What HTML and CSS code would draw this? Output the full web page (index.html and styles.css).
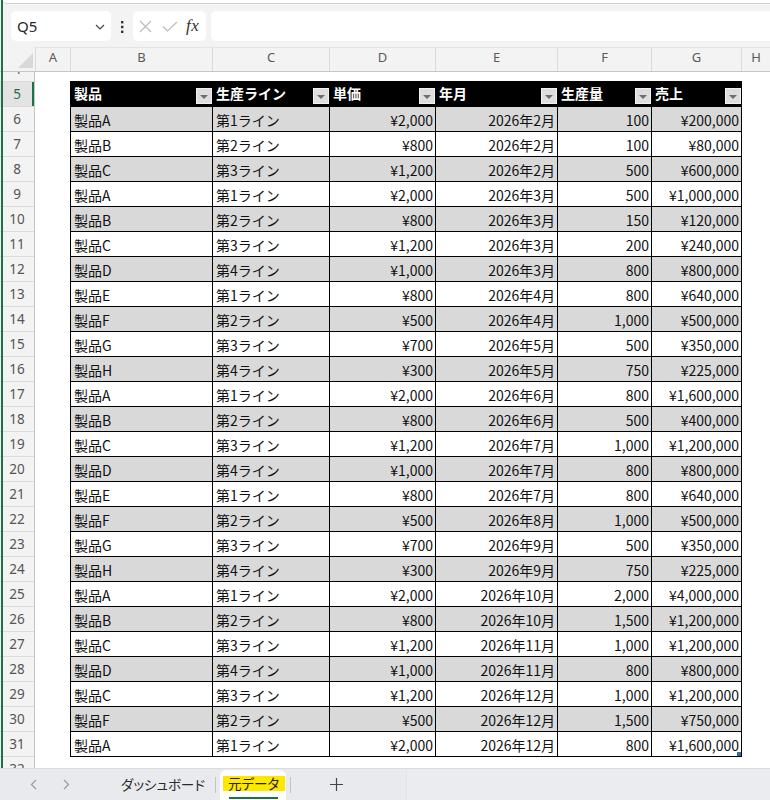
FILE: index.html
```html
<!DOCTYPE html>
<html lang="ja">
<head>
<meta charset="utf-8">
<title>元データ</title>
<link rel="stylesheet" href="styles.css">
</head>
<body>
<div class="app">
  <div class="topstrip"><div class="ribbon"></div></div>
  <div class="fbar">
    <div class="namebox">
      <span class="nb-text">Q5</span>
      <svg class="chev" width="10" height="6" viewBox="0 0 10 6"><path d="M1 1l4 4 4-4" fill="none" stroke="#444" stroke-width="1.2"/></svg>
    </div>
    <svg class="vdots" width="3" height="12" viewBox="0 0 3 12"><rect x="0" y="0" width="2.4" height="2.4" fill="#333"/><rect x="0" y="4.8" width="2.4" height="2.4" fill="#333"/><rect x="0" y="9.6" width="2.4" height="2.4" fill="#333"/></svg>
    <div class="fxbox">
      <svg class="ico-x" width="13" height="13" viewBox="0 0 13 13"><path d="M1 1l11 11M12 1L1 12" stroke="#bdbdbd" stroke-width="1.2" fill="none"/></svg>
      <svg class="ico-ok" width="16" height="11" viewBox="0 0 16 11"><path d="M1 5.5l4.5 4.5L15 1" stroke="#bdbdbd" stroke-width="1.2" fill="none"/></svg>
      <span class="fx"><i>f</i><i>x</i></span>
    </div>
    <div class="finput"></div>
  </div>

  <div class="colheads">
    <div class="corner"><svg width="15" height="15" viewBox="0 0 15 15"><polygon points="15,0 15,15 0,15" fill="#d8d8d8"/></svg></div>
    <div class="ch">A</div>
    <div class="ch">B</div>
    <div class="ch">C</div>
    <div class="ch">D</div>
    <div class="ch">E</div>
    <div class="ch">F</div>
    <div class="ch">G</div>
    <div class="ch">H</div>
  </div>

  <div class="sheet">
    <div class="rowheads">
      <div class="rh-inner">
        <div class="rh">4</div>
        <div class="rh sel">5</div>
        <div class="rh">6</div><div class="rh">7</div><div class="rh">8</div><div class="rh">9</div>
        <div class="rh">10</div><div class="rh">11</div><div class="rh">12</div><div class="rh">13</div>
        <div class="rh">14</div><div class="rh">15</div><div class="rh">16</div><div class="rh">17</div>
        <div class="rh">18</div><div class="rh">19</div><div class="rh">20</div><div class="rh">21</div>
        <div class="rh">22</div><div class="rh">23</div><div class="rh">24</div><div class="rh">25</div>
        <div class="rh">26</div><div class="rh">27</div><div class="rh">28</div><div class="rh">29</div>
        <div class="rh">30</div><div class="rh">31</div><div class="rh">32</div>
      </div>
    </div>
    <div class="canvas">
      <div class="tbl">
        <div class="tr th">
          <div class="c"><span class="hl">製品</span><span class="dd"></span></div>
          <div class="c"><span class="hl">生産ライン</span><span class="dd"></span></div>
          <div class="c"><span class="hl">単価</span><span class="dd"></span></div>
          <div class="c"><span class="hl">年月</span><span class="dd"></span></div>
          <div class="c"><span class="hl">生産量</span><span class="dd"></span></div>
          <div class="c"><span class="hl">売上</span><span class="dd"></span></div>
        </div>
        <div class="tr g"><div class="c">製品A</div><div class="c">第1ライン</div><div class="c r">¥2,000</div><div class="c r">2026年2月</div><div class="c r">100</div><div class="c r">¥200,000</div></div>
        <div class="tr"><div class="c">製品B</div><div class="c">第2ライン</div><div class="c r">¥800</div><div class="c r">2026年2月</div><div class="c r">100</div><div class="c r">¥80,000</div></div>
        <div class="tr g"><div class="c">製品C</div><div class="c">第3ライン</div><div class="c r">¥1,200</div><div class="c r">2026年2月</div><div class="c r">500</div><div class="c r">¥600,000</div></div>
        <div class="tr"><div class="c">製品A</div><div class="c">第1ライン</div><div class="c r">¥2,000</div><div class="c r">2026年3月</div><div class="c r">500</div><div class="c r">¥1,000,000</div></div>
        <div class="tr g"><div class="c">製品B</div><div class="c">第2ライン</div><div class="c r">¥800</div><div class="c r">2026年3月</div><div class="c r">150</div><div class="c r">¥120,000</div></div>
        <div class="tr"><div class="c">製品C</div><div class="c">第3ライン</div><div class="c r">¥1,200</div><div class="c r">2026年3月</div><div class="c r">200</div><div class="c r">¥240,000</div></div>
        <div class="tr g"><div class="c">製品D</div><div class="c">第4ライン</div><div class="c r">¥1,000</div><div class="c r">2026年3月</div><div class="c r">800</div><div class="c r">¥800,000</div></div>
        <div class="tr"><div class="c">製品E</div><div class="c">第1ライン</div><div class="c r">¥800</div><div class="c r">2026年4月</div><div class="c r">800</div><div class="c r">¥640,000</div></div>
        <div class="tr g"><div class="c">製品F</div><div class="c">第2ライン</div><div class="c r">¥500</div><div class="c r">2026年4月</div><div class="c r">1,000</div><div class="c r">¥500,000</div></div>
        <div class="tr"><div class="c">製品G</div><div class="c">第3ライン</div><div class="c r">¥700</div><div class="c r">2026年5月</div><div class="c r">500</div><div class="c r">¥350,000</div></div>
        <div class="tr g"><div class="c">製品H</div><div class="c">第4ライン</div><div class="c r">¥300</div><div class="c r">2026年5月</div><div class="c r">750</div><div class="c r">¥225,000</div></div>
        <div class="tr"><div class="c">製品A</div><div class="c">第1ライン</div><div class="c r">¥2,000</div><div class="c r">2026年6月</div><div class="c r">800</div><div class="c r">¥1,600,000</div></div>
        <div class="tr g"><div class="c">製品B</div><div class="c">第2ライン</div><div class="c r">¥800</div><div class="c r">2026年6月</div><div class="c r">500</div><div class="c r">¥400,000</div></div>
        <div class="tr"><div class="c">製品C</div><div class="c">第3ライン</div><div class="c r">¥1,200</div><div class="c r">2026年7月</div><div class="c r">1,000</div><div class="c r">¥1,200,000</div></div>
        <div class="tr g"><div class="c">製品D</div><div class="c">第4ライン</div><div class="c r">¥1,000</div><div class="c r">2026年7月</div><div class="c r">800</div><div class="c r">¥800,000</div></div>
        <div class="tr"><div class="c">製品E</div><div class="c">第1ライン</div><div class="c r">¥800</div><div class="c r">2026年7月</div><div class="c r">800</div><div class="c r">¥640,000</div></div>
        <div class="tr g"><div class="c">製品F</div><div class="c">第2ライン</div><div class="c r">¥500</div><div class="c r">2026年8月</div><div class="c r">1,000</div><div class="c r">¥500,000</div></div>
        <div class="tr"><div class="c">製品G</div><div class="c">第3ライン</div><div class="c r">¥700</div><div class="c r">2026年9月</div><div class="c r">500</div><div class="c r">¥350,000</div></div>
        <div class="tr g"><div class="c">製品H</div><div class="c">第4ライン</div><div class="c r">¥300</div><div class="c r">2026年9月</div><div class="c r">750</div><div class="c r">¥225,000</div></div>
        <div class="tr"><div class="c">製品A</div><div class="c">第1ライン</div><div class="c r">¥2,000</div><div class="c r">2026年10月</div><div class="c r">2,000</div><div class="c r">¥4,000,000</div></div>
        <div class="tr g"><div class="c">製品B</div><div class="c">第2ライン</div><div class="c r">¥800</div><div class="c r">2026年10月</div><div class="c r">1,500</div><div class="c r">¥1,200,000</div></div>
        <div class="tr"><div class="c">製品C</div><div class="c">第3ライン</div><div class="c r">¥1,200</div><div class="c r">2026年11月</div><div class="c r">1,000</div><div class="c r">¥1,200,000</div></div>
        <div class="tr g"><div class="c">製品D</div><div class="c">第4ライン</div><div class="c r">¥1,000</div><div class="c r">2026年11月</div><div class="c r">800</div><div class="c r">¥800,000</div></div>
        <div class="tr"><div class="c">製品C</div><div class="c">第3ライン</div><div class="c r">¥1,200</div><div class="c r">2026年12月</div><div class="c r">1,000</div><div class="c r">¥1,200,000</div></div>
        <div class="tr g"><div class="c">製品F</div><div class="c">第2ライン</div><div class="c r">¥500</div><div class="c r">2026年12月</div><div class="c r">1,500</div><div class="c r">¥750,000</div></div>
        <div class="tr"><div class="c">製品A</div><div class="c">第1ライン</div><div class="c r">¥2,000</div><div class="c r">2026年12月</div><div class="c r">800</div><div class="c r last">¥1,600,000<span class="handle"></span></div></div>
      </div>
    </div>
  </div>

  <div class="tabs">
    <div class="nav"><svg width="7" height="11" viewBox="0 0 7 11"><path d="M6 1L1.5 5.5 6 10" fill="none" stroke="#9a9a9a" stroke-width="1.2"/></svg></div>
    <div class="nav"><svg width="7" height="11" viewBox="0 0 7 11"><path d="M1 1l4.5 4.5L1 10" fill="none" stroke="#9a9a9a" stroke-width="1.2"/></svg></div>
    <div class="tab">ダッシュボード</div>
    <div class="tsep"></div>
    <div class="tab active"><span class="tcolor">元データ</span><span class="uline"></span></div>
    <div class="tsep"></div>
    <div class="addtab"><svg width="13" height="13" viewBox="0 0 13 13"><path d="M6.5 0v13M0 6.5h13" stroke="#444" stroke-width="1.2"/></svg></div>
    <div class="hscroll"></div>
  </div>
</div>
</body>
</html>
```

FILE: styles.css
```css
* { box-sizing: border-box; }
html, body { margin: 0; padding: 0; }
body {
  width: 770px;
  height: 800px;
  overflow: hidden;
  background: #f3f3f3;
  font-family: "Noto Sans CJK JP", "Noto Sans", sans-serif;
}
.app {
  position: relative;
  width: 770px;
  height: 800px;
  display: flex;
  flex-direction: column;
}
.app::before {
  content: "";
  position: absolute;
  left: 1px;
  top: 0;
  width: 2px;
  height: 768px;
  background: #1e7145;
  z-index: 5;
}

/* top ribbon edge */
.topstrip {
  height: 4px;
  background: #f3f3f3;
}
.ribbon {
  height: 4px;
  margin-left: 3px;
  background: #ffffff;
  border-bottom: 1px solid #d2d2d2;
  border-bottom-left-radius: 6px;
}

/* formula bar */
.fbar {
  height: 43px;
  display: flex;
  align-items: flex-start;
  padding: 7px 0 0 11px;
  background: #f3f3f3;
}
.namebox {
  width: 100px;
  height: 30px;
  background: #fff;
  border-radius: 5px;
  display: flex;
  align-items: center;
  justify-content: space-between;
  padding: 0 6px 0 6px;
}
.nb-text {
  font-family: "Noto Sans", sans-serif;
  font-size: 15px;
  color: #262626;
}
.chev { margin-top: 1px; }
.vdots {
  margin: 10px 9px 0 10px;
}
.fxbox {
  width: 73px;
  height: 30px;
  background: #fff;
  border-radius: 5px;
  display: flex;
  align-items: center;
  padding-left: 6px;
}
.ico-x { margin-right: 10px; }
.ico-ok { margin-right: 8px; margin-top: 1px; }
.fx {
  font-family: "Liberation Serif", serif;
  font-size: 17px;
  color: #333;
  letter-spacing: 0.5px;
}
.finput {
  flex: 1;
  height: 30px;
  margin-left: 5px;
  background: #fff;
  border-top-left-radius: 5px;
  border-bottom-left-radius: 5px;
}

/* column headers */
.colheads {
  height: 25px;
  display: grid;
  grid-template-columns: 35px 35px 142px 117px 106px 122px 94px 90px 1fr;
  background: #f3f3f3;
  border-bottom: 1px solid #c6c6c6;
}
.corner {
  display: flex;
  align-items: flex-end;
  justify-content: flex-end;
  padding: 0 2px 3px 0;
}
.ch {
  border-left: 1px solid #dadada;
  border-top: 1px solid #e4e4e4;
  display: flex;
  align-items: center;
  justify-content: center;
  padding-bottom: 5px;
  font-family: "Noto Sans", sans-serif;
  font-size: 13px;
  color: #5a5a5a;
}

/* sheet */
.sheet {
  height: 696px;
  display: flex;
}
.rowheads {
  width: 35px;
  background: #f3f3f3;
  border-right: 1px solid #c6c6c6;
  overflow: hidden;
}
.rh-inner { margin-top: -15px; }
.rh {
  height: 25px;
  border-bottom: 1px solid #dcdcdc;
  display: flex;
  align-items: center;
  justify-content: center;
  font-family: "Noto Sans", sans-serif;
  font-size: 13.5px;
  color: #555;
}
.rh.sel {
  background: #e3e3e3;
  color: #1e7145;
  box-shadow: inset -2px 0 0 #1e7145;
}
.canvas {
  flex: 1;
  background: #fff;
  padding: 9px 0 0 35px;
}

/* table */
.tbl {
  width: 672px;
  border-left: 1px solid #000;
  border-top: 1px solid #000;
}
.tr {
  display: grid;
  grid-template-columns: 142px 117px 106px 122px 94px 90px;
  height: 25px;
  background: #fff;
}
.tr.g { background: #d9d9d9; }
.c {
  position: relative;
  height: 25px;
  border-right: 1px solid #000;
  border-bottom: 1px solid #000;
  display: flex;
  align-items: center;
  padding: 1px 2px 0 3px;
  font-size: 14px;
  line-height: 1;
  color: #111;
  white-space: nowrap;
}
.c.r { justify-content: flex-end; }
.th { background: #000; }
.th .c {
  padding: 0 0 0 3px;
  align-items: stretch;
}
.hl {
  flex: 1;
  color: #fff;
  font-weight: bold;
  display: flex;
  align-items: center;
  padding-bottom: 3px;
}
.dd {
  align-self: flex-end;
  width: 16px;
  height: 16px;
  margin-bottom: 2px;
  background: #dedede;
  border: 1px solid #f2f2f2;
  display: flex;
  align-items: center;
  justify-content: center;
}
.dd::after {
  content: "";
  width: 0;
  height: 0;
  margin-top: 2px;
  border-left: 4px solid transparent;
  border-right: 4px solid transparent;
  border-top: 4px solid #6e6e6e;
}
.handle {
  position: absolute;
  right: 0;
  bottom: 0;
  width: 4px;
  height: 4px;
  background: #3668b8;
}

/* sheet tabs */
.tabs {
  height: 32px;
  display: flex;
  align-items: stretch;
  background: #e8eaed;
  border-top: 1px solid #dadcdf;
  padding-left: 22px;
}
.nav {
  width: 22px;
  display: flex;
  align-items: center;
  justify-content: center;
  margin-right: 11px;
}
.tab {
  width: 104px;
  margin-left: 23px;
  display: flex;
  align-items: center;
  justify-content: center;
  font-size: 13.5px;
  color: #2b2b2b;
  font-feature-settings: "palt";
  padding-bottom: 1px;
}
.tsep {
  width: 1px;
  height: 16px;
  align-self: center;
  background: #c4c4c4;
}
.tab.active {
  width: 66px;
  margin: 1px 4px 0 4px;
  background: #fff;
  border-radius: 6px 6px 0 0;
  flex-direction: column;
  justify-content: flex-start;
  padding: 6px 1px 0 2px;
}
.tcolor {
  width: 62px;
  height: 15px;
  background: #ffe800;
  display: flex;
  align-items: center;
  justify-content: center;
  font-size: 13.5px;
  line-height: 1;
  color: #222;
}
.uline {
  width: 49px;
  height: 2px;
  margin: 6px auto 0;
  background: #1e7145;
}
.addtab {
  width: 90px;
  display: flex;
  align-items: center;
  justify-content: center;
}
.hscroll {
  flex: 1;
  margin-left: 25px;
  border-left: 1px solid #e2e4e7;
  background: #eaecef;
}
```
